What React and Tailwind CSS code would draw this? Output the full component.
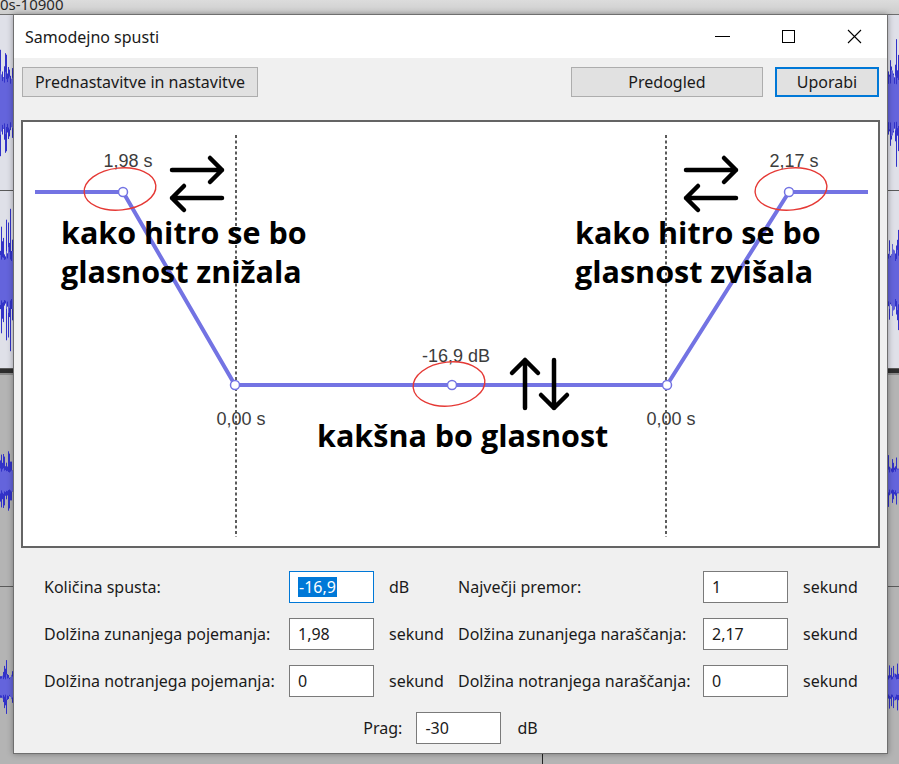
import React from "react";

const ui = { fontFamily: '"Noto Sans", "Open Sans", sans-serif' };
const arial = '"Liberation Sans", Arial, sans-serif';
const bold = { fontFamily: '"Open Sans", sans-serif' };

function wavePath(width, height, seed, amp, minA) {
  let s = seed;
  const rnd = () => {
    s = (s * 9301 + 49297) % 233280;
    return s / 233280;
  };
  const mid = height / 2;
  let d = "";
  for (let x = 0; x < width; x++) {
    const a = (minA + (1 - minA) * rnd() * rnd()) * amp * mid;
    d += `M${x + 0.5} ${(mid - a).toFixed(1)}V${(mid + a).toFixed(1)}`;
  }
  return d;
}

function Track({ h, seed, amp, bg, border = true }) {
  return (
    <div className={`relative ${bg} ${border ? "border-b border-[#5a5a5a]" : ""}`} style={{ height: h }}>
      <svg width="899" height={h} className="block">
        <path d={wavePath(899, h, seed, amp, 0.3)} stroke="#3232c8" strokeWidth="1" />
        <path d={wavePath(899, h, seed + 7, amp * 0.5, 0.5)} stroke="#6464dc" strokeWidth="1" />
      </svg>
    </div>
  );
}

function Button({ children, className = "" }) {
  return (
    <div
      className={`h-[30px] flex items-center justify-center bg-[#e1e1e1] text-[16px] text-[#1a1a1a] ${className}`}
    >
      {children}
    </div>
  );
}

function Field({ value, focused }) {
  return (
    <div
      className={`w-[85px] h-[32px] bg-white flex items-center pl-[8px] text-[16px] text-[#1a1a1a] border ${
        focused ? "border-[#0078d7]" : "border-[#7a7a7a]"
      }`}
    >
      {focused ? (
        <span className="bg-[#0078d7] text-white leading-[20px] px-px">{value}</span>
      ) : (
        value
      )}
    </div>
  );
}

function Swap({ x }) {
  return (
    <g transform={`translate(${x} 0)`} stroke="#000" strokeWidth="4.5" strokeLinecap="round" strokeLinejoin="round" fill="none">
      <path d="M0 170H50M38 158L50 170L38 182" />
      <path d="M50 198H0M12 186L0 198L12 210" />
    </g>
  );
}

function Graph() {
  const env = "#7373e3";
  const lbl = { fontFamily: arial, fontSize: 18, fill: "#3c3c3c" };
  return (
    <div className="relative ml-[-1px] mt-[23px] w-[859px] h-[428px] border-2 border-[#646464] bg-white overflow-hidden">
      <svg width="855" height="424" className="block">
        <g transform="translate(-23 -122)">
          <path d="M236 135V537M666 135V537" stroke="#333" strokeWidth="1.6" strokeDasharray="3 2.5" />
          <path
            d="M35 192H123L235 385H667L789 192H868"
            stroke={env}
            strokeWidth="4"
            fill="none"
            strokeLinejoin="round"
          />
          {[
            [123, 192],
            [235, 385],
            [452, 385],
            [667, 385],
            [789, 192],
          ].map(([cx, cy]) => (
            <circle key={cx} cx={cx} cy={cy} r="4.5" fill="#fff" stroke={env} strokeWidth="1.5" />
          ))}
          <text x="128" y="167" textAnchor="middle" style={lbl}>1,98 s</text>
          <text x="794" y="167" textAnchor="middle" style={lbl}>2,17 s</text>
          <text x="456" y="362" textAnchor="middle" style={lbl}>-16,9 dB</text>
          <text x="241" y="425" textAnchor="middle" style={lbl}>0,00 s</text>
          <text x="671" y="425" textAnchor="middle" style={lbl}>0,00 s</text>
          <g fill="none" stroke="#e53935" strokeWidth="1.4">
            <ellipse cx="120" cy="189" rx="36" ry="21" transform="rotate(-6 120 189)" />
            <ellipse cx="791" cy="189" rx="36" ry="21" transform="rotate(-6 791 189)" />
            <ellipse cx="449" cy="384" rx="36" ry="22" transform="rotate(-6 449 384)" />
          </g>
          <Swap x={172} />
          <Swap x={686} />
          <g stroke="#000" strokeWidth="4.5" strokeLinecap="round" strokeLinejoin="round" fill="none">
            <path d="M525 408V360M512 373L525 360L538 373" />
            <path d="M554 360V408M541 395L554 408L567 395" />
          </g>
        </g>
      </svg>
      <div className="absolute left-[38px] top-[91px] text-[30.5px] leading-[39px] font-bold text-black" style={bold}>
        kako hitro se bo
        <br />
        glasnost znižala
      </div>
      <div className="absolute left-[552px] top-[91px] text-[30.5px] leading-[39px] font-bold text-black" style={bold}>
        kako hitro se bo
        <br />
        glasnost zvišala
      </div>
      <div className="absolute left-[294px] top-[294px] text-[30.5px] leading-[39px] font-bold text-black" style={bold}>
        kakšna bo glasnost
      </div>
    </div>
  );
}

function Dialog() {
  return (
    <div
      className="absolute left-[13px] top-[14px] w-[875px] h-[740px] bg-[#f0f0f0] border border-[#6f6f6f] shadow-[0_0_6px_rgba(0,0,0,0.35)] flex flex-col"
      style={ui}
    >
      <div className="h-[43px] bg-white flex items-center pl-[11px] text-[16px] text-[#1a1a1a]">
        <span className="flex-1">Samodejno spusti</span>
        <div className="flex items-center h-full">
          <div className="w-[66px] flex justify-center">
            <div className="w-[15px] h-px bg-black" />
          </div>
          <div className="w-[66px] flex justify-center">
            <div className="w-[13px] h-[13px] border border-black" />
          </div>
          <div className="w-[66px] flex justify-center">
            <svg width="15" height="15" viewBox="0 0 15 15">
              <path d="M1 1L14 14M14 1L1 14" stroke="#000" strokeWidth="1.1" />
            </svg>
          </div>
        </div>
      </div>
      <div className="flex-1 px-[8px] pt-[9px]">
        <div className="flex">
          <Button className="w-[236px] border border-[#adadad]">Prednastavitve in nastavitve</Button>
          <div className="flex-1" />
          <Button className="w-[192px] border border-[#adadad]">Predogled</Button>
          <Button className="w-[104px] ml-[12px] border-2 border-[#0078d7]">Uporabi</Button>
        </div>
        <Graph />
        <div className="mt-[23px] ml-[22px] grid grid-cols-[245px_85px_84px_245px_85px_auto] gap-y-[15px] items-center text-[16px] text-[#1a1a1a]">
          <span>Količina spusta:</span>
          <Field value="-16,9" focused />
          <span className="pl-[15px]">dB</span>
          <span>Največji premor:</span>
          <Field value="1" />
          <span className="pl-[15px]">sekund</span>

          <span>Dolžina zunanjega pojemanja:</span>
          <Field value="1,98" />
          <span className="pl-[15px]">sekund</span>
          <span>Dolžina zunanjega naraščanja:</span>
          <Field value="2,17" />
          <span className="pl-[15px]">sekund</span>

          <span>Dolžina notranjega pojemanja:</span>
          <Field value="0" />
          <span className="pl-[15px]">sekund</span>
          <span>Dolžina notranjega naraščanja:</span>
          <Field value="0" />
          <span className="pl-[15px]">sekund</span>
        </div>
        <div className="mt-[15px] flex justify-center items-center text-[16px] text-[#1a1a1a]">
          <span className="mr-[14px]">Prag:</span>
          <Field value="-30" />
          <span className="ml-[16px]">dB</span>
        </div>
      </div>
    </div>
  );
}

export default function App() {
  return (
    <div className="relative w-[899px] h-[764px] overflow-hidden bg-[#b4b4b4]">
      <div className="h-[15px] bg-gradient-to-b from-[#dcdcdc] to-[#cdcdcd] border-b border-[#6e6e6e] overflow-hidden">
        <div className="mt-[-6px] text-[15px] leading-[20px] text-[#2a2a2a]" style={ui}>
          0s-10900
        </div>
      </div>
      <Track h={176} seed={11} amp={0.85} bg="bg-[#dfe0e8]" />
      <Track h={178} seed={23} amp={0.85} bg="bg-[#dfe0e8]" />
      <div className="h-[6px] bg-[#2e2e2e] border-b-2 border-[#8a8a8a]" />
      <Track h={212} seed={37} amp={0.32} bg="bg-[#b4b4b4]" />
      <Track h={200} seed={51} amp={0.3} bg="bg-[#b4b4b4]" border={false} />
      <div className="absolute left-[542px] top-[754px] w-px h-[10px] bg-[#222]" />
      <Dialog />
    </div>
  );
}
